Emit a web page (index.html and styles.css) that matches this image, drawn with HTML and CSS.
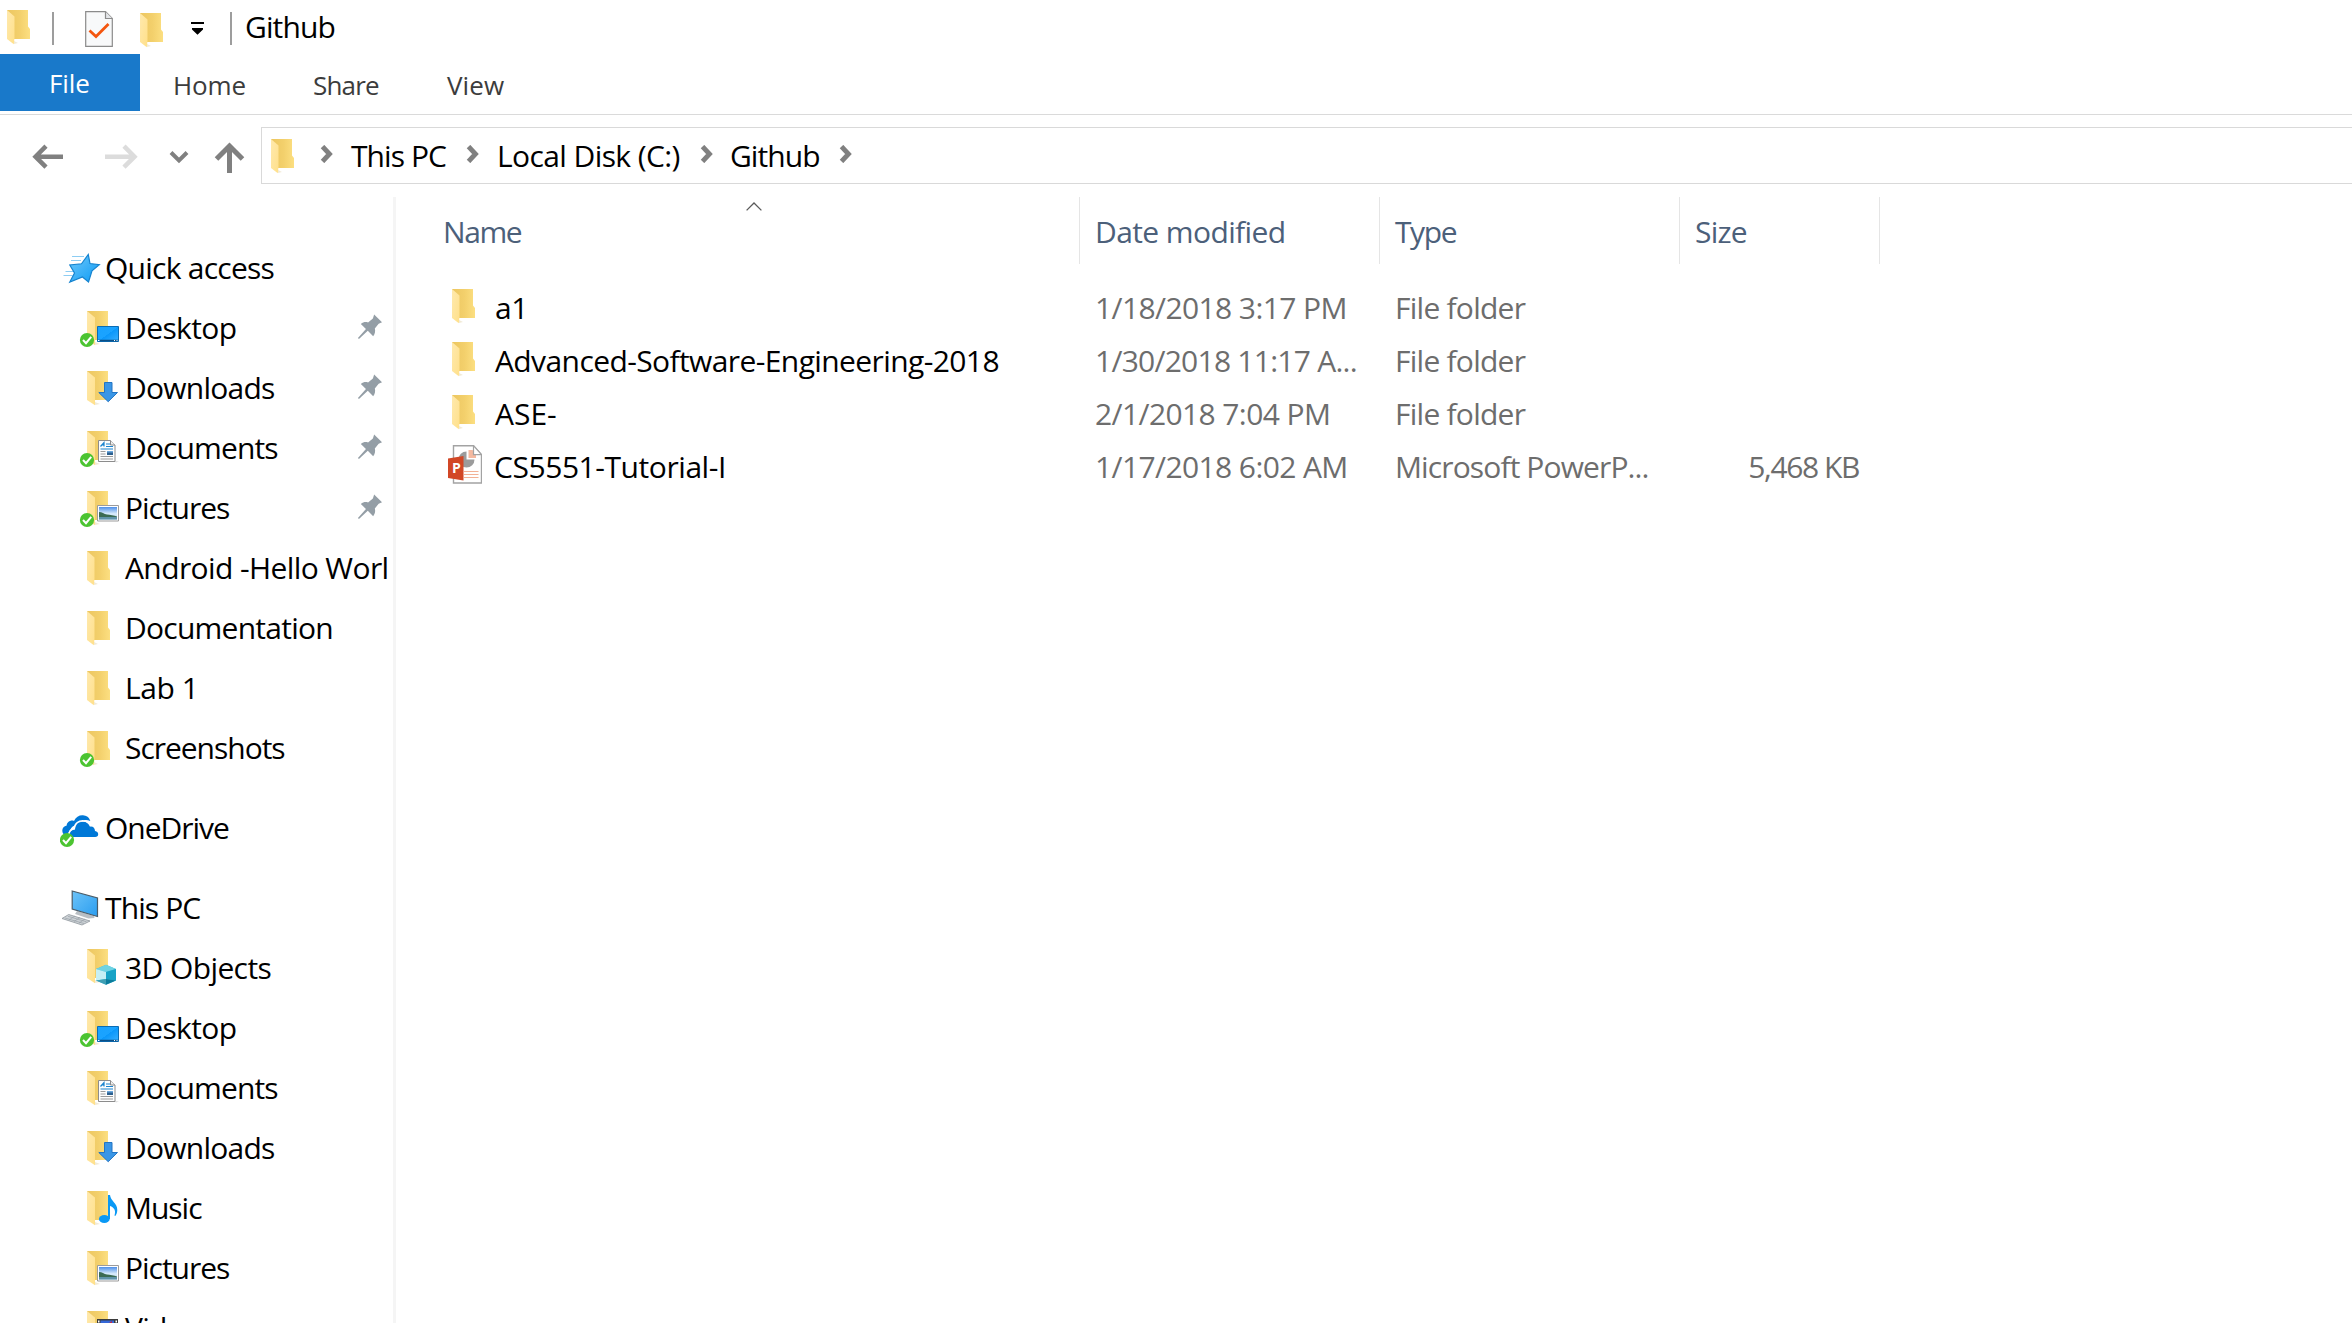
FILE: index.html
```html
<!DOCTYPE html>
<html lang="en">
<head>
<meta charset="utf-8">
<title>Github</title>
<link rel="stylesheet" href="styles.css">
</head>
<body>
<svg class="defs" aria-hidden="true">
  <defs>
    <linearGradient id="gBack" x1="0" y1="0" x2="1" y2="0"><stop offset="0" stop-color="#ecc660"/><stop offset=".55" stop-color="#f3d06c"/><stop offset="1" stop-color="#fcdf81"/></linearGradient>
    <linearGradient id="gFlap" x1="0" y1="0" x2="1" y2="1"><stop offset="0" stop-color="#ffe9ad"/><stop offset="1" stop-color="#ffe08a"/></linearGradient>
    <linearGradient id="gBlue" x1="0" y1="0" x2="1" y2="1"><stop offset="0" stop-color="#19a2ff"/><stop offset=".5" stop-color="#1aa3ff"/><stop offset=".51" stop-color="#0a97fa"/><stop offset="1" stop-color="#38b0ff"/></linearGradient>
    <linearGradient id="gStar" x1="0" y1="0" x2="1" y2="1"><stop offset="0" stop-color="#6fc8fa"/><stop offset="1" stop-color="#0c9bf5"/></linearGradient>
    <linearGradient id="gSky" x1="0" y1="0" x2="0" y2="1"><stop offset="0" stop-color="#4e8fe8"/><stop offset=".55" stop-color="#dceefc"/><stop offset="1" stop-color="#a9cdee"/></linearGradient>
    <linearGradient id="gScreen" x1="0" y1="0" x2="1" y2="1"><stop offset="0" stop-color="#6cc3f8"/><stop offset="1" stop-color="#2a9df0"/></linearGradient>

    <symbol id="folder-half" viewBox="0 0 44 44">
      <path d="M9 5H30V34H9Z" fill="url(#gBack)"/>
      <path d="M17 39l5-1-5-2z" fill="#f1ead6"/>
      <path d="M9 5l8 6.500V39.300L9 34Z" fill="url(#gFlap)"/>
    </symbol>
    <symbol id="folder" viewBox="0 0 44 44">
      <path d="M9 5H30V21.500l2 2.500V34H9Z" fill="url(#gBack)"/>
      <path d="M16 39l4-1-4-2z" fill="#f1ead6"/>
      <path d="M9 5l7.500 6.500V33l-.7 6.300L9 34Z" fill="url(#gFlap)"/>
    </symbol>
    <symbol id="ok" viewBox="0 0 44 44">
      <circle cx="9" cy="34" r="7.100" fill="#4cc431"/>
      <path d="M5 34l3 3.200 5.200-6.400" fill="none" stroke="#fff" stroke-width="2"/>
    </symbol>
    <symbol id="o-desktop" viewBox="0 0 44 44">
      <path d="M19.500 20.500h21v15h-21z" fill="url(#gBlue)" stroke="#0b6cb4"/>
      <path d="M20 34.500h20" stroke="#0b4f86" stroke-width="1.500"/>
      <path d="M20 34.500h1.500M36 34.500h1M38.500 34.500h1" stroke="#fff"/>
    </symbol>
    <symbol id="o-down" viewBox="0 0 44 44">
      <path d="M26.500 16.500h7.500V26.500h5.500L30.200 35.700 20.800 26.500h5.700z" fill="#3a96e6" stroke="#2275c4"/>
    </symbol>
    <symbol id="o-doc" viewBox="0 0 44 44">
      <path d="M37 35l4 .5-3 1z" fill="#ddd"/>
      <path d="M20.500 14.500h12l4.500 4.500v16.500h-16.500z" fill="#fdfdfd" stroke="#8c8c8c"/>
      <path d="M32.500 14.500v4.500h4.500" fill="#eee" stroke="#8c8c8c"/>
      <path d="M22.500 20.500l3.500-4v4M24 19h2M28 18h4M28 20.500h7M22.500 23h12.500" fill="none" stroke="#1a84cf" stroke-width="1.200"/>
      <path d="M22.500 25.500h5M22.500 28h5M22.500 30.500h12.500M22.500 33h12.500" stroke="#9a9a9a"/>
      <path d="M29 25h6v4h-6z" fill="#2c5f8e"/><path d="M29 25h6v1.500h-6z" fill="#6ba7dc"/>
    </symbol>
    <symbol id="o-pic" viewBox="0 0 44 44">
      <path d="M19.500 19.500h21v15.500h-21z" fill="#fff" stroke="#9b9b9b"/>
      <path d="M21 21h18v12.500H21z" fill="url(#gSky)"/>
      <path d="M21 26c3 0 5 2 8 2.500s7 .5 10 2v.8H21z" fill="#3b6b52"/>
      <path d="M21 31h18v2.500H21z" fill="#5f93a8"/>
    </symbol>
    <symbol id="o-cube" viewBox="0 0 44 44">
      <path d="M18 25l10-4.300L38 25v11.500l-10 4.300-10-4.300z" fill="#35bcd6"/>
      <path d="M18 25l10-4.300L38 25l-10 3z" fill="#6fd3e3"/>
      <path d="M18 25l10 3v7l-10 1.500z" fill="#c6eff4"/>
      <path d="M38 25l-10 3v7l10 1.500z" fill="#18a3c6"/>
      <path d="M18 36.500l10-1.500v5.800z" fill="#3f9fb4"/>
      <path d="M38 36.500l-10-1.500v5.800z" fill="#0b7c9c"/>
    </symbol>
    <symbol id="o-music" viewBox="0 0 44 44">
      <ellipse cx="26.300" cy="33" rx="5.400" ry="4" fill="#0a99f5"/>
      <path d="M30 9h2c.6 6 7.300 8 7.300 15 0 2.500-.9 4.500-2 6-.8-.2-1-.6-.6-1.300C38.500 23 34 20.500 32 20v13h-2z" fill="#0a99f5"/>
    </symbol>
    <symbol id="o-video" viewBox="0 0 44 44">
      <path d="M19 13h21v18H19z" fill="#3b3b3b"/>
      <path d="M22.500 14.500h13.500v15H22.500z" fill="#3568d8"/>
      <path d="M20 14.500h1.500v2H20zM37.500 14.500H39v2h-1.500z" fill="#fff"/>
      <path d="M31 17l3-2v3z" fill="#c2284a"/>
    </symbol>
    <symbol id="star" viewBox="0 0 44 44">
      <path d="M12 10.500h12M11 14.500h10M5.500 25.500h8M3.500 29.500h9" stroke="#8dcdf3" stroke-width="1"/>
      <path d="M28.300 8.500L30 17.500l9.300 1.200L32 24.800l-3.500 11.200-6-5L9.800 36l4.700-9L9.800 19l11.700-1.200z" fill="url(#gStar)" stroke="#1583cf" stroke-width="1.200"/>
    </symbol>
    <symbol id="cloud" viewBox="0 0 44 44">
      <path d="M2.300 24.500c0-2.500 1.700-4.500 4.400-5 0-3.500 4.300-6 7.300-4.500C16 10.500 20 8.800 24 9.500c4 .5 5.500 3 6.300 5.500-5-2-10-.5-11.800 3.500-4 .3-7.800 2.500-8.300 6.500-1.800 1-3 3-2.700 5C4.500 30 2.300 27.500 2.300 24.500z" fill="#0078d7"/>
      <path d="M10 31c-1.500-4 1-7.300 5-7.500C15 18.500 19 15.500 23 15.700c3.500 0 6 2 7 5 3-.5 5 1.500 5 4.300 2.300.3 3.200 1.700 3.200 3.200 0 1.800-1.200 2.800-3 2.800z" fill="#0078d7"/>
      <path d="M9.300 30c-1-4.500 1.500-7.300 5-7.500.3-5.500 4.700-7.800 8.700-7.700 3 0 6 1.500 7.400 4.300" fill="none" stroke="#fff" stroke-width="1.500"/>
    </symbol>
    <symbol id="pc" viewBox="0 0 44 44">
      <path d="M17 25l17 5 .5 2-6 .5L15 28z" fill="#b9bfc4"/>
      <path d="M2 32.500L8.700 28.500 30 35l-8 4z" fill="#cdd2d6" stroke="#8f979d" stroke-width=".8"/>
      <path d="M5 32l19 5.500M8 30.300l18.500 5.500M9 34l6-4M14 35.500l6-4M19 37l6-4" stroke="#98a1a8" stroke-width=".7"/>
      <path d="M12.200 5l25.300 7v18.500L12.200 23z" fill="url(#gScreen)" stroke="#4b5c68" stroke-width="1.200"/>
    </symbol>
    <symbol id="pin" viewBox="0 0 26 27">
      <path d="M17.300.5L25.500 8.500 22 10l-4 5c.8 3 .2 5.500-1.700 8L10.700 17.500 1.500 26 .5 25l8.300-9.500L3.500 10.300c2.500-2 5-2.300 7.500-1.500l5-4z" fill="#949ea6"/>
    </symbol>
    <symbol id="props" viewBox="0 0 28 36">
      <path d="M.7.700h19.800l6.800 6.800V35.300H.7z" fill="#f8f9fa" stroke="#8b8b8b" stroke-width="1.200"/>
      <path d="M20.500.700v6.800h6.800" fill="#e4e6e9" stroke="#8b8b8b" stroke-width="1.200"/>
      <path d="M4.500 19.500l6.500 6L23.500 13" fill="none" stroke="#f4560f" stroke-width="2.800"/>
    </symbol>
    <symbol id="crumb" viewBox="0 0 12 18">
      <path d="M2 1.500L9 9 2 16.500" fill="none" stroke="#808080" stroke-width="4.800"/>
    </symbol>
    <symbol id="ppt" viewBox="0 0 34 39">
      <path d="M5.500.700H25.500l8 9V38H5.500z" fill="#fff" stroke="#a3a3a3" stroke-width="1.400"/>
      <path d="M18.500 6.500v8h8a8 8 0 1 1-8-8z" fill="#9b9b9b"/>
      <path d="M20.500 5v8H28V8.500L24.500 5z" fill="#f4b9a0"/>
      <path d="M25.500.700v9h8z" fill="#fff" stroke="#a3a3a3" stroke-width="1.200"/>
      <path d="M16 26.500h14.500M16 29.500h14.500M16 32.500h14.500" stroke="#f2b196" stroke-width="1.200"/>
      <path d="M0 13.500l15.500-2.500v24.500L0 33z" fill="#d24726"/>
    </symbol>
  </defs>
</svg>

<div class="window">
  <header class="titlebar">
    <svg class="ic tb-folder"><use href="#folder"/></svg>
    <i class="rule"></i>
    <svg class="tb-props"><use href="#props"/></svg>
    <svg class="ic tb-new"><use href="#folder"/></svg>
    <svg class="tb-more" viewBox="0 0 13 13"><path d="M0 0h13v2H0zM1 6h11v1.500L6.500 12.800 1 7.500z"/></svg>
    <i class="rule"></i>
    <h1 class="title">Github</h1>
  </header>

  <nav class="tabs">
    <span class="tab file">File</span>
    <span class="tab home">Home</span>
    <span class="tab share">Share</span>
    <span class="tab view">View</span>
  </nav>

  <div class="navbar">
    <svg class="arrows" viewBox="0 0 261 58">
      <g fill="none" stroke="#808080">
        <path d="M63 29.700H36M46 19.200L35.500 29.700 46 40.200" stroke-width="4.500"/>
        <path d="M105 29.700h27M124 19.200l10.500 10.500L124 40.200" stroke="#dcdcdc" stroke-width="4.500"/>
        <path d="M171 25.500l8 8 8-8" stroke-width="4"/>
        <path d="M229.500 46V20M216.500 32l13-13 13 13" stroke-width="5"/>
      </g>
    </svg>
    <div class="address">
      <svg class="ic ad-folder"><use href="#folder"/></svg>
      <svg class="crumb first"><use href="#crumb"/></svg>
      <span class="part pc">This PC</span>
      <svg class="crumb"><use href="#crumb"/></svg>
      <span class="part disk">Local Disk (C:)</span>
      <svg class="crumb"><use href="#crumb"/></svg>
      <span class="part git">Github</span>
      <svg class="crumb"><use href="#crumb"/></svg>
    </div>
  </div>

  <div class="body">
    <aside class="tree">
      <div class="node root"><svg class="ic"><use href="#star"/></svg><span>Quick access</span></div>
      <div class="node"><svg class="ic"><use href="#folder-half"/><use href="#o-desktop"/><use href="#ok"/></svg><span class="open">Desktop</span><svg class="pin"><use href="#pin"/></svg></div>
      <div class="node"><svg class="ic"><use href="#folder-half"/><use href="#o-down"/></svg><span>Downloads</span><svg class="pin"><use href="#pin"/></svg></div>
      <div class="node"><svg class="ic"><use href="#folder-half"/><use href="#o-doc"/><use href="#ok"/></svg><span class="snug">Documents</span><svg class="pin"><use href="#pin"/></svg></div>
      <div class="node"><svg class="ic"><use href="#folder-half"/><use href="#o-pic"/><use href="#ok"/></svg><span class="tight">Pictures</span><svg class="pin"><use href="#pin"/></svg></div>
      <div class="node"><svg class="ic"><use href="#folder"/></svg><span class="open">Android -Hello Worl</span></div>
      <div class="node"><svg class="ic"><use href="#folder"/></svg><span>Documentation</span></div>
      <div class="node"><svg class="ic"><use href="#folder"/></svg><span class="wide">Lab 1</span></div>
      <div class="node"><svg class="ic"><use href="#folder"/><use href="#ok"/></svg><span class="tight">Screenshots</span></div>
      <div class="node root group"><svg class="ic"><use href="#cloud"/><use href="#ok" x="-2"/></svg><span class="tight">OneDrive</span></div>
      <div class="node root group"><svg class="ic"><use href="#pc"/></svg><span class="snug">This PC</span></div>
      <div class="node"><svg class="ic raised"><use href="#folder-half"/><use href="#o-cube"/></svg><span class="open">3D Objects</span></div>
      <div class="node"><svg class="ic"><use href="#folder-half"/><use href="#o-desktop"/><use href="#ok"/></svg><span class="open">Desktop</span></div>
      <div class="node"><svg class="ic"><use href="#folder-half"/><use href="#o-doc"/></svg><span class="snug">Documents</span></div>
      <div class="node"><svg class="ic"><use href="#folder-half"/><use href="#o-down"/></svg><span>Downloads</span></div>
      <div class="node"><svg class="ic"><use href="#folder-half"/><use href="#o-music"/></svg><span class="tight">Music</span></div>
      <div class="node"><svg class="ic"><use href="#folder-half"/><use href="#o-pic"/></svg><span class="tight">Pictures</span></div>
      <div class="node"><svg class="ic"><use href="#folder-half"/><use href="#o-video"/></svg><span>Videos</span></div>
    </aside>

    <main class="files">
      <div class="grid head">
        <div class="cell name"><span class="narrow">Name</span><svg class="sort" viewBox="0 0 16 9"><path d="M.6 8.400L8 1l7.400 7.400" fill="none" stroke="#5a5a5a" stroke-width="1.300"/></svg></div>
        <div class="cell"><span class="open">Date modified</span></div>
        <div class="cell"><span class="narrow">Type</span></div>
        <div class="cell"><span>Size</span></div>
      </div>
      <div class="grid row"><div class="cell name"><svg class="ic"><use href="#folder"/></svg><span class="wide">a1</span></div><div class="cell"><span class="open">1/18/2018 3:17 PM</span></div><div class="cell"><span>File folder</span></div><div class="cell size"></div></div>
      <div class="grid row"><div class="cell name"><svg class="ic"><use href="#folder"/></svg><span class="open">Advanced-Software-Engineering-2018</span></div><div class="cell"><span>1/30/2018 11:17 A...</span></div><div class="cell"><span>File folder</span></div><div class="cell size"></div></div>
      <div class="grid row"><div class="cell name"><svg class="ic"><use href="#folder"/></svg><span class="even">ASE-</span></div><div class="cell"><span class="open">2/1/2018 7:04 PM</span></div><div class="cell"><span>File folder</span></div><div class="cell size"></div></div>
      <div class="grid row"><div class="cell name"><span class="ppt"><svg class="ppt-page"><use href="#ppt"/></svg><b>P</b></span><span class="wide">CS5551-Tutorial-I</span></div><div class="cell"><span class="open">1/17/2018 6:02 AM</span></div><div class="cell"><span class="snug">Microsoft PowerP...</span></div><div class="cell size"><span class="narrow">5,468 KB</span></div></div>
    </main>
  </div>
</div>
</body>
</html>
```

FILE: styles.css
```css
* { box-sizing: border-box; }

body {
  margin: 0;
  background: #fff;
  color: #000;
  font-family: "Open Sans", "Noto Sans", sans-serif;
  font-size: 30px;
  letter-spacing: -0.75px;
  overflow: hidden;
}

svg { display: block; flex: none; }
.defs { position: absolute; width: 0; height: 0; }
.ic { width: 44px; height: 44px; }

/* letter-spacing steps */
.even { letter-spacing: 0; }
.wide { letter-spacing: -0.44px; }
.open { letter-spacing: -0.6px; }
.snug { letter-spacing: -0.88px; }
.tight { letter-spacing: -1.03px; }
.narrow { letter-spacing: -1.4px; }

.window { height: 1323px; display: flex; flex-direction: column; overflow: hidden; }

/* title bar */
.titlebar { height: 54px; display: flex; align-items: flex-start; }
.rule { width: 2px; height: 33px; margin-top: 12px; background: #9d9d9d; }
.tb-folder { margin: 5px 12px 0 -2px; }
.tb-folder + .rule { margin-left: -2px; }
.tb-props { width: 28px; height: 36px; margin: 11px 18px 0 31px; }
.tb-new { margin: 8px 16px 0 0; }
.tb-more { width: 13px; height: 13px; margin: 22px 26px 0 0; }
.title { margin: 0 0 0 13px; font-size: 30px; font-weight: 400; line-height: 53px; letter-spacing: -0.88px; }

/* ribbon tabs */
.tabs { height: 61px; display: flex; border-bottom: 1px solid #dadada; font-size: 26px; letter-spacing: -0.1px; color: #3c3c3c; }
.tab { line-height: 62px; }
.tab.file { width: 140px; height: 57px; padding-left: 49px; line-height: 59px; background: #1979ca; color: #fff; }
.tab.home { width: 139px; padding-left: 33px; }
.tab.share { width: 134px; padding-left: 34px; letter-spacing: -0.8px; }
.tab.view { padding-left: 34px; letter-spacing: 0.1px; }

/* navigation */
.navbar { height: 82px; padding-top: 12px; display: flex; }
.arrows { width: 261px; height: 58px; }
.address { flex: 1; height: 57px; display: flex; align-items: center; border: 1px solid #d9d9d9; border-right: 0; }
.crumb { width: 13px; height: 18px; margin-top: -3px; }
.crumb.first { margin-left: 14px; }
.part.pc { width: 133px; padding-left: 18px; letter-spacing: -0.94px; }
.part.disk { width: 221px; padding-left: 18px; letter-spacing: -0.6px; }
.part.git { width: 126px; padding-left: 17px; letter-spacing: -0.95px; }

.body { flex: 1; min-height: 0; display: flex; }

/* folder tree */
.tree { width: 396px; padding-top: 41px; border-right: 3px solid #f5f5f5; overflow: hidden; }
.node { height: 60px; display: flex; align-items: flex-start; padding: 0 10px 0 78px; line-height: 60px; white-space: nowrap; }
.node .ic { margin: 8px 3px 0 0; }
.node.root { padding-left: 60px; }
.node.root .ic { margin-right: 1px; }
.node.group { margin-top: 20px; }
.node .raised { margin-top: 6px; }
.node .pin { width: 26px; height: 26px; margin: 16px 0 0 auto; }

/* file list */
.files { flex: 1; }
.grid { display: grid; grid-template-columns: 684px 300px 300px 200px; }
.cell { white-space: nowrap; }
.head { height: 67px; margin-bottom: 17px; line-height: 69px; color: #4c607a; }
.head .cell { height: 67px; padding-left: 15px; border-right: 1px solid #e5e5e5; }
.head .name { position: relative; padding-left: 47px; }
.sort { position: absolute; left: 350px; top: 5px; width: 16px; height: 9px; }
.row { height: 53px; line-height: 54px; color: #6d6d6d; }
.row .name { display: flex; padding-left: 47px; color: #000; }
.row .cell:not(.name) { padding-left: 15px; }
.row .name .ic { margin: 3px 8px 0 0; }
.row .cell.size { text-align: right; padding-right: 21px; }
.ppt { position: relative; width: 34px; height: 39px; margin: 5px 12px 0 5px; }
.ppt-page { width: 34px; height: 39px; }
.ppt b { position: absolute; left: 4px; top: 14px; font-size: 14px; line-height: 18px; font-weight: 700; letter-spacing: 0; color: #fff; }
```
